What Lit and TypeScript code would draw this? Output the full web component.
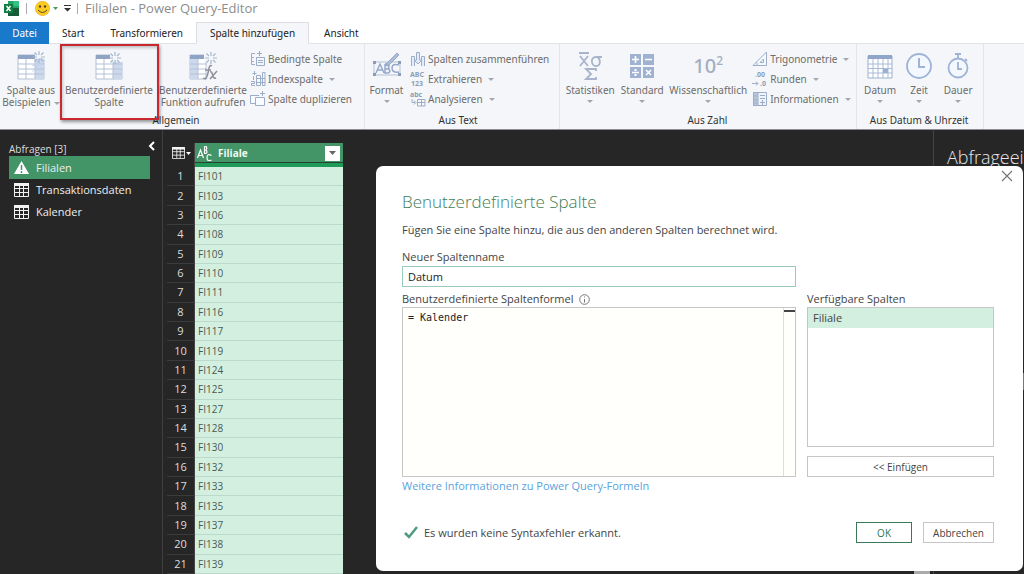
import { LitElement, html, css, svg, nothing, TemplateResult } from "lit";
import { customElement, property, state } from "lit/decorators.js";
import { classMap } from "lit/directives/class-map.js";

const burst = (x: number, y: number) => svg`
  <g stroke="#a9b7ce" stroke-width="1.2" transform="translate(${x} ${y})">
    <path d="M0-6V-2M0 2V6M-6 0H-2M2 0H6M-4.5-4.5L-2-2M2 2L4.5 4.5M-4.5 4.5L-2 2M2-2L4.5-4.5"/>
  </g>`;

const icons: Record<string, TemplateResult> = {
  examples: html`<svg width="28" height="28" viewBox="0 0 28 28" fill="none">
    <path d="M1 3H27V27H1Z" fill="#fff" stroke="#b4c1d6"/><path d="M1 3H18V7H1Z" fill="#8fa3c4"/>
    <path d="M18 7H27V27H18Z" fill="#ccd9ed"/><path d="M1 12H27M1 17H27M1 22H27M9 7V27M18 7V27" stroke="#b4c1d6"/>
    <path d="M18 0H28V7H18Z" fill="#f4f6f9"/><path d="M22 6L15 14H19L14 21L24 12H21L26 6Z" fill="#c3d3eb"/>${burst(22, 5)}</svg>`,
  column: html`<svg width="28" height="28" viewBox="0 0 28 28" fill="none">
    <path d="M1 3H27V27H1Z" fill="#fff" stroke="#b4c1d6"/><path d="M1 3H16V7H1Z" fill="#8fa3c4"/>
    <path d="M18 8H27V27H18Z" fill="#ccd9ed"/><path d="M1 12H27M1 17H27M1 22H27M9 7V27M18 7V27" stroke="#b4c1d6"/>
    <path d="M15 0H28V10H15Z" fill="#f4f6f9"/>${burst(20, 6)}</svg>`,
  func: html`<svg width="28" height="28" viewBox="0 0 28 28" fill="none">
    <path d="M1 3H24V27H1Z" fill="#fff" stroke="#b4c1d6"/><path d="M1 3H16V7H1Z" fill="#8fa3c4"/>
    <path d="M1 7H9V27H1Z" fill="#ccd9ed"/><path d="M1 12H24M1 17H24M1 22H24M9 7V27M17 7V27" stroke="#b4c1d6"/>
    <path d="M15 0H28V28H18V10H15Z" fill="#f4f6f9"/>${burst(22, 6)}
    <path d="M23 14C20 12 20 17 19 21S17 28 14 26M16 18H22M21 20C24 18 23 28 27 26M28 19L21 27" stroke="#8d9099" stroke-width="1.5"/></svg>`,
  format: html`<svg width="30" height="28" viewBox="0 0 30 28" fill="none">
    <path d="M2 10H28V23H2Z" stroke="#b1c1db"/><g fill="#8d9cb3"><path d="M1 9h3v3H1zM26 9h3v3h-3zM1 21h3v3H1zM26 21h3v3h-3z"/></g>
    <path d="M4 21L8 12L12 21M5.500 18H10.500M13 12V21H16Q19 20 17 17H13M13 12H16Q18 14 16 17M27 13Q20 11 20 16T27 20" stroke="#94a9cc" stroke-width="1.500"/>
    <path d="M14 14L15 11L25 1L27 3L17 13Z" fill="#adbdd8" stroke="#8296b7" stroke-width=".7"/></svg>`,
  stats: html`<svg width="28" height="28" viewBox="0 0 28 28" fill="none" stroke="#a8b4cb" stroke-width="1.800">
    <path d="M3 1H13M4 4L12 14M12 4L4 14M26 5H20C14 5 15 14 20 14S25 7 21 5M20 19V17H10L15 22L10 27H20V25"/></svg>`,
  standard: html`<svg width="28" height="28" viewBox="0 0 28 28" fill="none">
    <path d="M2 2H13V13H2ZM15 2H26V13H15ZM2 15H13V26H2ZM15 15H26V26H15Z" fill="#a0b2d1"/>
    <path d="M4 7.500H11M7.500 4V11M17 7.500H24M4 20.500H11M18 18L23 23M23 18L18 23" stroke="#fff" stroke-width="1.600"/>
    <path d="M6.500 17h2v2h-2zM6.500 22h2v2h-2z" fill="#fff"/></svg>`,
  date: html`<svg width="28" height="28" viewBox="0 0 28 28" fill="none">
    <path d="M2 4H26V26H2Z" fill="#fff" stroke="#9bb0d0"/><path d="M2 3H26V7H2Z" fill="#8fa5c9"/>
    <path d="M2 12H26M2 16.500H26M2 21H26M7 7V26M12 7V26M17 7V26M22 7V26" stroke="#a9bad7"/><path d="M17 17H22V21H17Z" fill="#9bb0d0"/></svg>`,
  time: html`<svg width="28" height="28" viewBox="0 0 28 28" fill="none" stroke="#9eb3d5">
    <circle cx="14" cy="14" r="12" fill="#f3f8ff" stroke-width="1.800"/><path d="M14 6V15H20" stroke-width="2"/></svg>`,
  duration: html`<svg width="28" height="28" viewBox="0 0 28 28" fill="none" stroke="#9eb3d5">
    <circle cx="14" cy="16" r="9.500" fill="#f3f8ff" stroke-width="1.800"/><path d="M14 10V17H18M11 2H17M14 2V6M21 7L23 9" stroke-width="1.800"/></svg>`,
  conditional: html`<svg width="16" height="16" viewBox="0 0 16 16" fill="none" stroke="#9dadc8">
    <path d="M5 2.500H1.500V13.500H5M1.500 6.500H4M1.500 10.500H4M6.500 6.500H14.500V14.500H6.500ZM8 9.500H13M8 11.500H13"/><path d="M9.500 0V5M7 2.500H12"/></svg>`,
  index: html`<svg width="16" height="16" viewBox="0 0 16 16" fill="none" stroke="#9dadc8">
    <path d="M6.500 4.500H10.500V14.500H6.500ZM12.500 1.500H15V14.500H12.500ZM6.500 7.500H15M6.500 11.500H15M3.500 5V9M1 10.500H4.500V12.500H1.500V14.500H5M4.500 0V4M2.500 2.500H6.500"/></svg>`,
  duplicate: html`<svg width="16" height="16" viewBox="0 0 16 16" fill="none" stroke="#9dadc8">
    <path d="M5 12.500H.5V4.500H9M5.500 6.500H14.500V14.500H5.500Z" fill="#f8fbff"/><path d="M12.500 0V5M10 2.500H15"/></svg>`,
  merge: html`<svg width="16" height="16" viewBox="0 0 16 16" fill="none" stroke="#9dadc8">
    <path d="M1.500 15V5.500H4.500V15M11.500 15V5.500H14.500V15M6.500 1.500H9.500V9H12L8 13L4 9H6.500Z" fill="#e2ecfa"/></svg>`,
  trig: html`<svg width="16" height="16" viewBox="0 0 16 16" fill="none" stroke="#9dadc8">
    <path d="M1 14.500H14.500V1ZM8 11.500H11.500V8Z" fill="#f4f9ff"/><path d="M4 11Q6 12 5 14"/></svg>`,
  info: html`<svg width="16" height="16" viewBox="0 0 16 16" fill="none" stroke="#9dadc8">
    <path d="M1.500 1.500H14.500V14.500H1.500Z" fill="#eef4fc"/><path d="M1.500 1.500H6V14.500H1.500Z" fill="#b8c7df"/><path d="M2 5H5M2 9H5M2 12H5M8 4.500H13M8 7.500H13M8 11.500H13M10.500 9V14"/></svg>`,
  parse: html`<svg class="mini" width="16" height="16" viewBox="0 0 16 16" fill="none" stroke="#9dadc8">
    <text x="0" y="6">abc</text><path d="M7.500 8.500H15V15H7.500ZM7.500 11.500H15M11.500 8.500V15M2 8V11.500H5M4 9.500L6 11.500L4 13.500"/></svg>`,
  extract: html`<svg class="mini" width="16" height="16" viewBox="0 0 16 16"><text x="0" y="6">ABC</text><text x="1" y="15">123</text></svg>`,
  round: html`<svg class="mini" width="16" height="16" viewBox="0 0 16 16" fill="none" stroke="#9dadc8"><text x="3" y="6">.00</text><text x="8" y="15">.0</text><path d="M0 12.500H6M4 10.500L6 12.500L4 14.500"/></svg>`,
};

const grid = html`<svg class="grid" width="15" height="14" viewBox="0 0 15 14" fill="none" stroke="#f2f2f2">
  <path d="M.5 1H14.500V13.500H.5ZM.5 5.500H14.500M.5 9.500H14.500M5.500 2V13M9.500 2V13"/><path d="M0 1.500H15" stroke-width="3"/></svg>`;

@customElement("ribbon-button")
class RibbonButton extends LitElement {
  @property() icon = "";
  @property() label = "";
  @property({ type: Boolean }) caret = false;
  @property({ type: Boolean }) small = false;
  @property({ type: Boolean }) marked = false;

  static styles = css`
    :host { display: block; position: relative; }
    button { border: 0; background: none; padding: 0; margin: 0; color: #6c6c6c; font: 10px/12px "Noto Sans", sans-serif; white-space: pre; display: flex; align-items: center; }
    .big { flex-direction: column; width: 100%; }
    .art { height: 30px; margin: 2px 0 3px; display: flex; align-items: center; justify-content: center; }
    .small { height: 20px; gap: 2px; }
    .small .label { line-height: 20px; }
    svg { display: block; overflow: visible; }
    .caret { width: 0; height: 0; border: 3px solid transparent; border-top-color: #a3a7ad; border-bottom: 0; display: inline-block; vertical-align: middle; }
    .big .caret { margin-top: 4px; }
    .big .inline { margin: 0 0 0 3px; }
    .small .caret { margin-left: 4px; }
    .power { font-size: 20px; line-height: 28px; font-weight: 500; color: #a3aec2; }
    .power sup { font-size: 12px; line-height: 0; }
    .mini text { font: bold 7px "Noto Sans", sans-serif; fill: #8f9eb6; stroke: none; }
    .mark { position: absolute; inset: -5px -3px auto -2px; height: 76px; box-sizing: border-box; border: 2px solid #c9292e; box-shadow: 1px 2px 3px #0006, inset 1px 2px 3px #0003; pointer-events: none; }
  `;

  render() {
    const caret = this.caret ? html`<span class="caret"></span>` : nothing;
    if (this.small) {
      return html`<button class="small" type="button">${icons[this.icon]}<span class="label">${this.label}</span>${caret}</button>`;
    }
    const wraps = this.label.includes("\n");
    const art = this.icon === "power" ? html`<span class="power">10<sup>2</sup></span>` : icons[this.icon];
    return html`<button class="big" type="button">
        <span class="art">${art}</span><span>${this.label}${wraps && this.caret ? html`<span class="caret inline"></span>` : nothing}</span>${wraps ? nothing : caret}
      </button>${this.marked ? html`<span class="mark"></span>` : nothing}`;
  }
}

@customElement("query-ribbon")
class QueryRibbon extends LitElement {
  static styles = css`
    :host { display: flex; height: 86px; box-sizing: border-box; background: #f4f6f9; border-bottom: 1px solid #8b8d90; color: #333; font: 10px/14px "Noto Sans", sans-serif; }
    .group { display: flex; flex-direction: column; justify-content: space-between; border-right: 1px solid #e3e5e8; padding: 5px 10px 2px 0; box-sizing: border-box; }
    .items { display: flex; }
    .stack { display: grid; align-content: start; }
    .name { text-align: center; }
    ribbon-button { flex: none; }
    .w-s { width: 39px; } .w-m { width: 52px; } .w-l { width: 62px; } .w-xl { width: 80px; } .w-xxl { width: 94px; }
    .group.first { padding-right: 12px; }
    .group.text { padding-left: 2px; }
    .inset { padding-left: 4px; }
    .last { padding-right: 5px; }
    .front { z-index: 1; }
  `;
  private small(icon: string, label: string, caret = false) {
    return html`<ribbon-button small icon=${icon} label=${label} ?caret=${caret}></ribbon-button>`;
  }
  render() {
    return html`
      <section class="group first">
        <div class="items">
          <ribbon-button class="w-l" icon="examples" label=${"Spalte aus\nBeispielen"} caret></ribbon-button>
          <ribbon-button class="w-xxl front" icon="column" label=${"Benutzerdefinierte\nSpalte"} marked></ribbon-button>
          <ribbon-button class="w-xxl" icon="func" label=${"Benutzerdefinierte\nFunktion aufrufen"}></ribbon-button>
          <div class="stack">${this.small("conditional", "Bedingte Spalte")}${this.small("index", "Indexspalte", true)}${this.small("duplicate", "Spalte duplizieren")}</div>
        </div>
        <div class="name">Allgemein</div>
      </section>
      <section class="group text">
        <div class="items">
          <ribbon-button class="w-s" icon="format" label="Format" caret></ribbon-button>
          <div class="stack inset">${this.small("merge", "Spalten zusammenführen")}${this.small("extract", "Extrahieren", true)}${this.small("parse", "Analysieren", true)}</div>
        </div>
        <div class="name">Aus Text</div>
      </section>
      <section class="group inset last">
        <div class="items">
          <ribbon-button class="w-m" icon="stats" label="Statistiken" caret></ribbon-button>
          <ribbon-button class="w-m" icon="standard" label="Standard" caret></ribbon-button>
          <ribbon-button class="w-xl" icon="power" label="Wissenschaftlich" caret></ribbon-button>
          <div class="stack inset">${this.small("trig", "Trigonometrie", true)}${this.small("round", "Runden", true)}${this.small("info", "Informationen", true)}</div>
        </div>
        <div class="name">Aus Zahl</div>
      </section>
      <section class="group inset last">
        <div class="items">
          <ribbon-button class="w-s" icon="date" label="Datum" caret></ribbon-button>
          <ribbon-button class="w-s" icon="time" label="Zeit" caret></ribbon-button>
          <ribbon-button class="w-s" icon="duration" label="Dauer" caret></ribbon-button>
        </div>
        <div class="name">Aus Datum &amp; Uhrzeit</div>
      </section>`;
  }
}

@customElement("custom-column-dialog")
class CustomColumnDialog extends LitElement {
  @state() private name = "Datum";
  @state() private formula = "= Kalender";

  static styles = css`
    :host { display: block; background: #fff; border-radius: 7px; color: #444; font: 11px/16px "Open Sans", sans-serif; }
    .close { position: absolute; top: 4px; right: 10px; width: 12px; height: 12px; padding: 0; border: 0; background: none; }
    .close svg { display: block; }
    .body { padding: 23px 29px 0 26px; }
    h1 { margin: 0; font: 300 17px/26px "Open Sans", sans-serif; color: #3f7d57; }
    p { margin: 6px 0 10px; line-height: 18px; }
    .cols { display: grid; grid-template-columns: 1fr 187px; column-gap: 11px; }
    .side { display: flex; flex-direction: column; }
    label, .caption { display: flex; align-items: center; gap: 5px; height: 16px; }
    input { box-sizing: border-box; width: 100%; height: 21px; margin: 1px 0 4px; border: 1px solid #9bcabb; padding: 0 5px; font: inherit; color: #222; outline: 0; display: block; }
    .editor { display: flex; height: 170px; box-sizing: border-box; border: 1px solid #c6c6c6; background: #fffffc; }
    textarea { flex: 1; min-width: 0; border: 0; resize: none; outline: 0; background: none; padding: 3px 5px; font: 10px/14px "DejaVu Sans Mono", monospace; color: #222; }
    .ruler { width: 12px; border-left: 1px solid #ddd; box-sizing: border-box; padding-top: 2px; }
    .tick { height: 2px; background: #444; }
    .head { height: 42px; }
    .list { height: 140px; box-sizing: border-box; border: 1px solid #c6c6c6; margin: 0 0 9px; padding: 0; list-style: none; }
    .list li { background: #d3efe0; padding: 1px 5px; line-height: 18px; }
    .btn { height: 21px; box-sizing: border-box; border: 1px solid #c6c6c6; background: #fff; color: #444; font: 10px/16px "Open Sans", sans-serif; padding: 0 9px; }
    a { color: #5ba3dc; text-decoration: none; line-height: 18px; }
    .foot { display: flex; align-items: center; gap: 11px; padding: 27px 29px 28px 28px; }
    .status { flex: 1; display: flex; align-items: center; gap: 6px; }
    .ok { width: 56px; border-color: #3b7a59; color: #2f7650; }
  `;

  render() {
    return html`
      <button class="close" type="button" aria-label="Schließen"><svg width="12" height="12" viewBox="0 0 12 12" stroke="#777" stroke-width="1.2"><path d="M1 1L11 11M11 1L1 11"/></svg></button>
      <div class="body">
        <h1>Benutzerdefinierte Spalte</h1>
        <p>Fügen Sie eine Spalte hinzu, die aus den anderen Spalten berechnet wird.</p>
        <div class="cols">
          <div>
            <label for="name">Neuer Spaltenname</label>
            <input id="name" .value=${this.name} @input=${(e: Event) => (this.name = (e.target as HTMLInputElement).value)} />
            <label for="formula">Benutzerdefinierte Spaltenformel
              <svg width="11" height="11" viewBox="0 0 11 11" fill="none" stroke="#777"><circle cx="5.500" cy="5.500" r="4.800"/><path d="M5.500 5V8.500M5.500 2.500V3.500"/></svg>
            </label>
            <div class="editor">
              <textarea id="formula" spellcheck="false" .value=${this.formula} @input=${(e: Event) => (this.formula = (e.target as HTMLTextAreaElement).value)}></textarea>
              <div class="ruler"><div class="tick"></div></div>
            </div>
            <a href="#formeln">Weitere Informationen zu Power Query-Formeln</a>
          </div>
          <div class="side">
            <div class="head"></div>
            <div class="caption">Verfügbare Spalten</div>
            <ul class="list"><li>Filiale</li></ul>
            <button class="btn" type="button">&lt;&lt; Einfügen</button>
          </div>
        </div>
      </div>
      <div class="foot">
        <div class="status"><svg width="14" height="13" viewBox="0 0 14 13" fill="none" stroke="#4f9a80" stroke-width="2.500"><path d="M1 7L5 11L13 1"/></svg>Es wurden keine Syntaxfehler erkannt.</div>
        <button class="btn ok" type="button">OK</button>
        <button class="btn" type="button">Abbrechen</button>
      </div>`;
  }
}

@customElement("app-root")
class AppRoot extends LitElement {
  @state() private selected = "Filialen";
  private tabs = ["Datei", "Start", "Transformieren", "Spalte hinzufügen", "Ansicht"];
  private queries = ["Filialen", "Transaktionsdaten", "Kalender"];
  private rows = [101, 103, 106, 108, 109, 110, 111, 116, 117, 119, 124, 125, 127, 128, 130, 132, 133, 135, 137, 138, 139];

  static styles = css`
    :host { display: flex; flex-direction: column; height: 100vh; overflow: hidden; background: #fff; font: 11px/16px "Open Sans", sans-serif; }
    button { font: inherit; border: 0; background: none; padding: 0; }
    svg { display: block; flex: none; }
    .title { height: 22px; box-sizing: border-box; padding: 0 0 6px 4px; display: flex; align-items: center; color: #8d8d8d; font-size: 13px; }
    .bar { width: 1px; height: 11px; background: #aaa; margin: 0 8px 0 7px; }
    .smile { display: flex; align-items: center; gap: 3px; }
    .smile + svg { margin-left: 6px; }
    .smile + svg + .bar { margin: 0 7px 0 6px; }
    .tabs { display: flex; height: 22px; font: 10px/20px "Noto Sans", sans-serif; }
    .tab { color: #222; border-bottom: 1px solid #e0e2e5; padding: 0 15px; box-sizing: border-box; }
    .tab.file { background: #1979ca; color: #fff; border-color: #1979ca; padding: 0; width: 49px; }
    .tab.mid { padding: 0 13px; }
    .tab.active { background: #f4f6f9; border: 1px solid #dcdee2; border-bottom-color: #f4f6f9; padding: 0 13px; }
    .rest { flex: 1; border-bottom: 1px solid #e0e2e5; }
    .work { flex: 1; min-height: 0; position: relative; display: grid; grid-template-columns: 163px 1fr 91px; background: #262626; color: #eee; }
    .nav { border-right: 1px solid #3f3f3f; padding: 11px 7px 0 9px; }
    .navhead { display: flex; justify-content: space-between; height: 15px; line-height: 16px; font-size: 10px; color: #ddd; }
    .query { display: flex; align-items: center; gap: 7px; width: 141px; height: 22px; padding-left: 5px; color: #eee; }
    .query.on { background: #439467; height: 23px; }
    .data { padding: 13px 0 0 4px; min-height: 0; }
    table { height: 100%; border-collapse: separate; border-spacing: 0; table-layout: fixed; width: 176px; }
    th, td { padding: 0; font-weight: 400; }
    thead th { height: 24px; box-sizing: border-box; }
    .num { width: 28px; border-right: 1px solid #444; box-sizing: border-box; text-align: center; color: #ddd; }
    tbody .num { border-bottom: 1px solid #3b3b3b; }
    .cell { background: #d3efe0; border-bottom: 1px solid #bcdacb; color: #4a5a52; font-size: 10px; line-height: 16px; padding-left: 3px; }
    .colhead { background: #439467; }
    .inner { display: flex; align-items: center; gap: 6px; height: 24px; box-sizing: border-box; border-bottom: 4px solid #1f9a58; padding: 0 3px 0 2px; font-weight: 700; font-size: 10px; color: #f2faf5; box-shadow: inset 0 -1px #27402f; }
    .inner span { flex: 1; text-align: left; }
    .filter { width: 15px; height: 15px; background: #fff; display: grid; place-items: center; }
    .corner { display: flex; align-items: center; gap: 1px; padding-left: 5px; height: 24px; padding-bottom: 4px; box-sizing: border-box; }
    .corner .grid { width: 13px; height: 12px; }
    .settings { border-left: 1px solid #444; padding: 15px 0 0 13px; font: 300 18px/24px "Open Sans", sans-serif; white-space: nowrap; overflow: hidden; color: #e8e8e8; }
    .dialog { position: absolute; top: 36px; left: 376px; right: 1px; }
    .thumb { position: absolute; bottom: 0; right: 94px; width: 16px; height: 4px; background: #aaa; }
    .step { position: absolute; right: 0; top: 243px; width: 80px; height: 17px; background: #439467; }
  `;

  render() {
    return html`
      <header class="title">
        <svg width="15" height="15" viewBox="0 0 15 15"><path d="M4 0H15V15H4Z" fill="#21a366"/><path d="M9.500 0H15V5H9.500Z" fill="#33c481"/><path d="M4 7H15V15H4Z" fill="#185c37"/><path d="M0 3H9V12H0Z" fill="#107c41"/><path d="M2.500 5L6.500 10M6.500 5L2.500 10" stroke="#fff" stroke-width="1.400"/></svg>
        <i class="bar"></i>
        <span class="smile"><svg width="15" height="15" viewBox="0 0 15 15"><circle cx="7.500" cy="7.500" r="7.200" fill="#fbca1e" stroke="#e0a21b" stroke-width=".5"/><circle cx="5" cy="5.500" r="1.200" fill="#543"/><circle cx="10" cy="5.500" r="1.200" fill="#543"/><path d="M3 9Q7.500 14 12 9" fill="none" stroke="#543"/></svg>
          <svg width="5" height="3" viewBox="0 0 5 3"><path d="M0 0H5L2.500 3Z" fill="#4d9a5c"/></svg></span>
        <svg width="7" height="7" viewBox="0 0 7 7" fill="#333"><path d="M0 0H7V1H0ZM0 3H7L3.500 6.500Z"/></svg>
        <i class="bar"></i>Filialen - Power Query-Editor
      </header>
      <nav class="tabs">
        ${this.tabs.map((t, i) => html`<button type="button" class=${classMap({ tab: true, file: i === 0, mid: i === 1 || i === 2, active: i === 3 })}>${t}</button>`)}
        <span class="rest"></span>
      </nav>
      <query-ribbon></query-ribbon>
      <main class="work">
        <aside class="nav">
          <div class="navhead">Abfragen [3]
            <svg width="7" height="10" viewBox="0 0 7 10" fill="none" stroke="#fff" stroke-width="2"><path d="M6 1L2 5L6 9"/></svg></div>
          ${this.queries.map((q, i) => html`<button type="button" class=${classMap({ query: true, on: q === this.selected })} @click=${() => (this.selected = q)}>
            ${i === 0 ? html`<svg width="15" height="14" viewBox="0 0 15 14"><path d="M7.500 0L15 13H0Z" fill="#fff"/><path d="M7.500 4V9M7.500 10V12" stroke="#439467" stroke-width="1.500"/></svg>` : grid}${q}</button>`)}
        </aside>
        <section class="data">
          <table>
            <thead><tr>
              <th class="num"><div class="corner">${grid}<svg width="5" height="3" viewBox="0 0 5 3"><path d="M0 0H5L2.500 3Z" fill="#fff"/></svg></div></th>
              <th class="colhead"><div class="inner">
                <svg width="15" height="15" viewBox="0 0 15 15" fill="none" stroke="#fff" stroke-width="1.200"><path d="M.5 12L3.500 4L6.500 12M1.500 9.500H5.500M7.500 .5V7.500H9Q11 6 9 4H7.500M7.500 .5H9Q10.500 2 9 4M14.500 9.500Q10 7 10 11.500T14.500 14"/></svg>
                <span>Filiale</span><button class="filter" type="button" aria-label="Filter"><svg width="7" height="4" viewBox="0 0 7 4"><path d="M0 0H7L3.500 4Z" fill="#666"/></svg></button>
              </div></th>
            </tr></thead>
            <tbody>${this.rows.map((r, i) => html`<tr><td class="num">${i + 1}</td><td class="cell">FI${r}</td></tr>`)}</tbody>
          </table>
        </section>
        <aside class="settings">Abfrageeinstellungen</aside>
        <span class="step"></span><span class="thumb"></span>
        <custom-column-dialog class="dialog"></custom-column-dialog>
      </main>`;
  }
}
